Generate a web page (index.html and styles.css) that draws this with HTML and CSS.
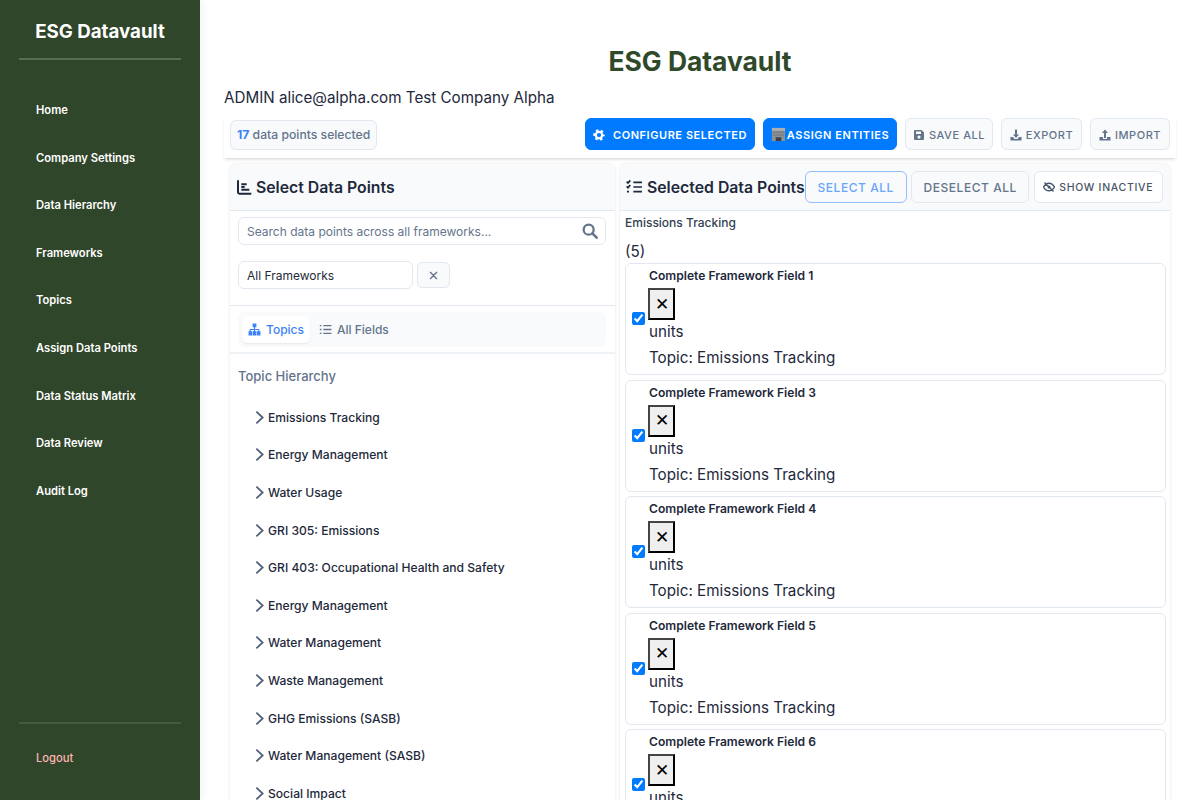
FILE: index.html
```html
<!DOCTYPE html>
<html lang="en">
<head>
  <meta charset="UTF-8">
  <meta name="viewport" content="width=device-width, initial-scale=1.0">
  <title>ESG Datavault</title>
  <link rel="stylesheet" href="styles.css">
</head>
<body>
  <aside class="sidebar">
    <div class="sidebarBrand">ESG Datavault</div>
    <nav class="sidebarNav">
      <a href="#">Home</a>
      <a href="#">Company Settings</a>
      <a href="#">Data Hierarchy</a>
      <a href="#">Frameworks</a>
      <a href="#">Topics</a>
      <a href="#">Assign Data Points</a>
      <a href="#">Data Status Matrix</a>
      <a href="#">Data Review</a>
      <a href="#">Audit Log</a>
    </nav>
    <div class="sidebarFoot"><a href="#">Logout</a></div>
  </aside>

  <main class="main">
    <h1 class="pageTitle">ESG Datavault</h1>
    <p class="userLine">ADMIN alice@alpha.com Test Company Alpha</p>

    <div class="toolbar">
      <div class="selectedCount"><b>17</b> data points selected</div>
      <div class="toolbarActions">
        <button class="btn btnPrimary btnConfigure">
          <svg class="icon" viewBox="0 0 24 24"><circle cx="12" cy="12" r="6.500" fill="none" stroke="currentColor" stroke-width="4.500"/><circle cx="12" cy="12" r="9.500" fill="none" stroke="currentColor" stroke-width="4" stroke-dasharray="5 4.950" stroke-dashoffset="2.500"/></svg>
          CONFIGURE SELECTED
        </button>
        <button class="btn btnPrimary btnAssign">
          <svg class="buildingIcon" viewBox="0 0 16 16"><rect x="1" y="1" width="14" height="14" fill="#8b9196"/><rect x="1" y="1" width="14" height="3" fill="#a9afb3"/><rect x="2" y="5" width="12" height="1" fill="#6f757a"/><rect x="2" y="8" width="12" height="1" fill="#6f757a"/><rect x="5" y="11" width="6" height="4" fill="#3c4145"/></svg>ASSIGN ENTITIES
        </button>
        <button class="btn btnLight btnSave">
          <svg class="icon" viewBox="0 0 24 24"><path fill="currentColor" fill-rule="evenodd" d="M4 2h13l5 5v13a2 2 0 0 1-2 2H4a2 2 0 0 1-2-2V4a2 2 0 0 1 2-2zm2 3v5h10V5zm6 8a3.200 3.200 0 1 0 0 6.400 3.200 3.200 0 0 0 0-6.400z"/></svg>
          SAVE ALL
        </button>
        <button class="btn btnLight btnExport">
          <svg class="icon" viewBox="0 0 24 24"><path fill="currentColor" d="M10 1h4v10h4l-6 7-6-7h4zM1 16h5l3 4h6l3-4h5v7H1z"/></svg>
          EXPORT
        </button>
        <button class="btn btnLight btnImport">
          <svg class="icon" viewBox="0 0 24 24"><path fill="currentColor" d="M12 1l6 7h-4v10h-4V8H6zM1 16h7v4h8v-4h7v7H1z"/></svg>
          IMPORT
        </button>
      </div>
    </div>

    <div class="panels">
      <section class="panel panelLeft">
        <header class="panelHead">
          <svg class="headIcon" viewBox="0 0 24 24"><path fill="none" stroke="currentColor" stroke-width="3" d="M3 2v18a2 2 0 0 0 2 2h18M8 8h8M8 12h5M8 16h12"/></svg>
          <h2>Select Data Points</h2>
        </header>
        <div class="filters">
          <div class="searchBox">
            <span>Search data points across all frameworks...</span>
            <svg class="searchIcon" viewBox="0 0 24 24"><circle cx="10" cy="10" r="7.500" fill="none" stroke="currentColor" stroke-width="3.400"/><path d="M15.500 15.500L22 22" stroke="currentColor" stroke-width="3.800" stroke-linecap="round"/></svg>
          </div>
          <div class="frameworkRow">
            <div class="frameworkSelect">All Frameworks</div>
            <button class="clearBtn">
              <svg viewBox="0 0 10 10"><path d="M1.500 1.500l7 7M8.500 1.500l-7 7" stroke="currentColor" stroke-width="1.500" stroke-linecap="round"/></svg>
            </button>
          </div>
        </div>
        <div class="tabsWrap">
          <div class="tabs">
            <div class="tab tabActive">
              <svg class="tabIcon" viewBox="0 0 24 24"><path fill="currentColor" d="M8.500 1h7v7H13v3h7a1 1 0 0 1 1 1v3h2v8h-7v-8h3v-2h-6v2h2v8H9v-8h2v-2H5v2h3v8H1v-8h2v-3a1 1 0 0 1 1-1h7V8H8.500z"/></svg>
              Topics
            </div>
            <div class="tab">
              <svg class="tabIcon" viewBox="0 0 24 24"><path fill="none" stroke="currentColor" stroke-width="2.400" d="M8 5h15M8 12h15M8 19h15M1.500 5h3M1.500 12h3M1.500 19h3"/></svg>
              All Fields
            </div>
          </div>
        </div>
        <div class="treeTitle">Topic Hierarchy</div>
        <ul class="tree">
          <li><svg class="chevron" viewBox="0 0 10 16"><path d="M1.500 1.500L8.500 8l-7 6.500" fill="none" stroke="currentColor" stroke-width="2"/></svg>Emissions Tracking</li>
          <li><svg class="chevron" viewBox="0 0 10 16"><path d="M1.500 1.500L8.500 8l-7 6.500" fill="none" stroke="currentColor" stroke-width="2"/></svg>Energy Management</li>
          <li><svg class="chevron" viewBox="0 0 10 16"><path d="M1.500 1.500L8.500 8l-7 6.500" fill="none" stroke="currentColor" stroke-width="2"/></svg>Water Usage</li>
          <li><svg class="chevron" viewBox="0 0 10 16"><path d="M1.500 1.500L8.500 8l-7 6.500" fill="none" stroke="currentColor" stroke-width="2"/></svg>GRI 305: Emissions</li>
          <li><svg class="chevron" viewBox="0 0 10 16"><path d="M1.500 1.500L8.500 8l-7 6.500" fill="none" stroke="currentColor" stroke-width="2"/></svg>GRI 403: Occupational Health and Safety</li>
          <li><svg class="chevron" viewBox="0 0 10 16"><path d="M1.500 1.500L8.500 8l-7 6.500" fill="none" stroke="currentColor" stroke-width="2"/></svg>Energy Management</li>
          <li><svg class="chevron" viewBox="0 0 10 16"><path d="M1.500 1.500L8.500 8l-7 6.500" fill="none" stroke="currentColor" stroke-width="2"/></svg>Water Management</li>
          <li><svg class="chevron" viewBox="0 0 10 16"><path d="M1.500 1.500L8.500 8l-7 6.500" fill="none" stroke="currentColor" stroke-width="2"/></svg>Waste Management</li>
          <li><svg class="chevron" viewBox="0 0 10 16"><path d="M1.500 1.500L8.500 8l-7 6.500" fill="none" stroke="currentColor" stroke-width="2"/></svg>GHG Emissions (SASB)</li>
          <li><svg class="chevron" viewBox="0 0 10 16"><path d="M1.500 1.500L8.500 8l-7 6.500" fill="none" stroke="currentColor" stroke-width="2"/></svg>Water Management (SASB)</li>
          <li><svg class="chevron" viewBox="0 0 10 16"><path d="M1.500 1.500L8.500 8l-7 6.500" fill="none" stroke="currentColor" stroke-width="2"/></svg>Social Impact</li>
        </ul>
      </section>

      <section class="panel panelRight">
        <header class="panelHead">
          <svg class="headIcon" viewBox="0 0 24 24"><path fill="none" stroke="currentColor" stroke-width="2.600" d="M11 5h13M11 12h13M11 19h13M1 4l2 2 3.500-4M1 11l2 2 3.500-4M1.500 19h3"/></svg>
          <h2>Selected Data Points</h2>
          <div class="headActions">
            <button class="btn btnOutline">SELECT ALL</button>
            <button class="btn btnLight btnDeselect">DESELECT ALL</button>
            <button class="btn btnGhost">
              <svg class="icon" viewBox="0 0 24 24"><path fill="none" stroke="currentColor" stroke-width="2.600" d="M1 12c3-5 7-7.500 11-7.500S20 7 23 12c-3 5-7 7.500-11 7.500S4 17 1 12zM3 3l18 18"/><circle cx="12" cy="12" r="3" fill="currentColor"/></svg>
              SHOW INACTIVE
            </button>
          </div>
        </header>
        <div class="selectedBody">
          <div class="groupName">Emissions Tracking</div>
          <div class="groupCount">(5)</div>

          <div class="fieldCard">
            <input class="fieldCheck" type="checkbox" checked>
            <div class="fieldInfo">
              <div class="fieldName">Complete Framework Field 1</div>
              <button class="brokenBtn">✕</button>
              <div>units</div>
              <div class="fieldTopic">Topic: Emissions Tracking</div>
            </div>
          </div>
          <div class="fieldCard">
            <input class="fieldCheck" type="checkbox" checked>
            <div class="fieldInfo">
              <div class="fieldName">Complete Framework Field 3</div>
              <button class="brokenBtn">✕</button>
              <div>units</div>
              <div class="fieldTopic">Topic: Emissions Tracking</div>
            </div>
          </div>
          <div class="fieldCard">
            <input class="fieldCheck" type="checkbox" checked>
            <div class="fieldInfo">
              <div class="fieldName">Complete Framework Field 4</div>
              <button class="brokenBtn">✕</button>
              <div>units</div>
              <div class="fieldTopic">Topic: Emissions Tracking</div>
            </div>
          </div>
          <div class="fieldCard">
            <input class="fieldCheck" type="checkbox" checked>
            <div class="fieldInfo">
              <div class="fieldName">Complete Framework Field 5</div>
              <button class="brokenBtn">✕</button>
              <div>units</div>
              <div class="fieldTopic">Topic: Emissions Tracking</div>
            </div>
          </div>
          <div class="fieldCard">
            <input class="fieldCheck" type="checkbox" checked>
            <div class="fieldInfo">
              <div class="fieldName">Complete Framework Field 6</div>
              <button class="brokenBtn">✕</button>
              <div>units</div>
              <div class="fieldTopic">Topic: Emissions Tracking</div>
            </div>
          </div>
        </div>
      </section>
    </div>
  </main>
</body>
</html>
```

FILE: styles.css
```css
* {
  box-sizing: border-box;
  margin: 0;
  padding: 0;
}
html, body {
  height: 100%;
  overflow: hidden;
}
body {
  display: flex;
  background-color: #fff;
  color: #1e293b;
  font-family: Inter, "Liberation Sans", sans-serif;
  font-size: 15.200px;
}
button {
  font-family: inherit;
}
a {
  text-decoration: none;
}

/* sidebar */
.sidebar {
  flex: none;
  width: 200px;
  height: 800px;
  display: flex;
  flex-direction: column;
  padding: 0 19px;
  background-color: #30462a;
  box-shadow: 2px 0 8px rgba(0, 0, 0, 0.06);
}
.sidebarBrand {
  height: 60px;
  padding-top: 20px;
  border-bottom: 2px solid #5a6b55;
  color: #fff;
  font-size: 18.700px;
  font-weight: 700;
  line-height: 24px;
  text-align: center;
}
.sidebarNav {
  display: flex;
  flex-direction: column;
  flex: 1;
  padding-top: 27px;
}
.sidebarNav a {
  height: 47.600px;
  padding: 0 17px;
  color: #fff;
  font-size: 11.200px;
  font-weight: 600;
  line-height: 47.600px;
}
.sidebarFoot {
  height: 78px;
  padding: 23px 17px 0;
  border-top: 2px solid #455a40;
}
.sidebarFoot a {
  color: #ffb3b3;
  font-size: 11.200px;
  font-weight: 500;
  line-height: 20px;
}

/* main area */
.main {
  flex: 1;
  min-width: 0;
  height: 800px;
  padding: 0 24px;
  overflow: hidden;
}
.pageTitle {
  padding-top: 44px;
  color: #2f4a2a;
  font-size: 26.400px;
  font-weight: 700;
  line-height: 34px;
  text-align: center;
}
.userLine {
  margin-top: 10px;
  font-size: 15.200px;
  line-height: 20px;
}

.toolbar {
  display: flex;
  align-items: flex-end;
  justify-content: space-between;
  height: 40px;
  padding: 0 6px 8px;
  margin-top: 10px;
  box-shadow: 0 2px 3px -1px rgba(30, 41, 59, 0.22);
}
.selectedCount {
  padding: 0 6px;
  height: 30px;
  border: 1px solid #e2e8f0;
  border-radius: 6px;
  background-color: #f8fafc;
  color: #64748b;
  font-size: 12.200px;
  font-weight: 500;
  line-height: 28px;
}
.selectedCount b {
  color: #3b82f6;
  font-weight: 700;
}
.toolbarActions {
  display: flex;
  gap: 8px;
}
.toolbarActions .btn {
  padding-top: 1px;
}
.btn {
  display: inline-flex;
  align-items: center;
  justify-content: center;
  gap: 4px;
  height: 32px;
  padding: 0;
  border: 1px solid #e2e8f0;
  border-radius: 6px;
  font-size: 11px;
  font-weight: 600;
  letter-spacing: 0.55px;
  white-space: nowrap;
}
.icon {
  flex: none;
  width: 12px;
  height: 12px;
}
.btnPrimary {
  border-color: #007bff;
  background-color: #007bff;
  color: #fff;
}
.btnConfigure {
  gap: 8px;
  width: 170px;
}
.btnAssign {
  gap: 1px;
  width: 134px;
}
.buildingIcon {
  flex: none;
  width: 15px;
  height: 15px;
}
.btnLight {
  background-color: #f8fafc;
  color: #64748b;
  font-weight: 500;
}
.btnSave {
  width: 88px;
}
.btnExport {
  width: 81px;
}
.btnImport {
  width: 80px;
}
.btnOutline {
  width: 102px;
  border: 1.500px solid #93c0fb;
  background-color: #f8fafc;
  color: #6aa5f8;
  font-size: 12px;
  font-weight: 500;
}
.btnDeselect {
  width: 118px;
  font-size: 12px;
}
.btnGhost {
  width: 129px;
  background-color: #fff;
  color: #475569;
  font-size: 10.500px;
  font-weight: 500;
  letter-spacing: 0.7px;
}

/* panels */
.panels {
  display: flex;
  gap: 5px;
  padding: 6px 6px 0;
}
.panel {
  flex: none;
  height: 660px;
  border-radius: 6px;
  background-color: #fff;
  box-shadow: 0 0 3px rgba(30, 41, 59, 0.12);
  overflow: hidden;
}
.panelLeft {
  width: 385px;
}
.panelRight {
  width: 550px;
}
.panelHead {
  display: flex;
  align-items: center;
  gap: 5px;
  height: 47px;
  padding: 0 7px 0 6px;
  border-bottom: 1px solid #e2e8f0;
  background-color: #f8fafc;
}
.panelLeft .panelHead {
  gap: 4px;
}
.panelHead h2 {
  margin-top: 2px;
  font-size: 15.800px;
  font-weight: 600;
  line-height: 20px;
  white-space: nowrap;
}
.headIcon {
  flex: none;
  width: 16px;
  height: 16px;
}
.headActions {
  display: flex;
  flex: none;
  gap: 4.500px;
  margin-left: -5px;
}

.filters {
  height: 95px;
  padding: 6px 9px 0 8px;
  border-bottom: 1px solid #e2e8f0;
}
.searchBox {
  display: flex;
  align-items: center;
  justify-content: space-between;
  height: 28px;
  padding: 0 7px 0 8px;
  border: 1px solid #e2e8f0;
  border-radius: 6px;
  color: #64748b;
  font-size: 12px;
}
.searchIcon {
  width: 16px;
  height: 16px;
  color: #64748b;
}
.frameworkRow {
  display: flex;
  align-items: center;
  gap: 4px;
  margin-top: 16px;
}
.frameworkSelect {
  width: 175px;
  height: 28px;
  padding: 0 8px;
  border: 1px solid #e2e8f0;
  border-radius: 6px;
  font-size: 12px;
  line-height: 27px;
}
.clearBtn {
  display: flex;
  align-items: center;
  justify-content: center;
  width: 33px;
  height: 26px;
  border: 1px solid #e2e8f0;
  border-radius: 5px;
  background-color: #f8fafc;
  color: #64748b;
}
.clearBtn svg {
  width: 9px;
  height: 9px;
}
.tabsWrap {
  height: 48px;
  padding: 6px 9px 0 8px;
  border-bottom: 2px solid #eef1f6;
}
.tabs {
  display: flex;
  align-items: center;
  gap: 3px;
  height: 35px;
  padding: 0 4px;
  border-radius: 6px;
  background-color: #f8fafc;
}
.tab {
  display: flex;
  align-items: center;
  gap: 5px;
  height: 27px;
  padding: 0 6px;
  border-radius: 5px;
  color: #64748b;
  font-size: 12px;
  font-weight: 500;
}
.tabActive {
  background-color: #fff;
  color: #3b82f6;
  box-shadow: 0 1px 2px rgba(0, 0, 0, 0.08);
}
.tabIcon {
  width: 13px;
  height: 13px;
}
.treeTitle {
  padding: 13px 8px 0;
  color: #64748b;
  font-size: 13px;
  font-weight: 500;
  line-height: 18px;
}
.tree {
  list-style: none;
  padding: 13.500px 0 0 25px;
}
.tree li {
  display: flex;
  align-items: center;
  gap: 4px;
  height: 37.600px;
  font-size: 12.100px;
  font-weight: 500;
}
.chevron {
  width: 9px;
  height: 15px;
  color: #52617a;
}

/* selected list */
.selectedBody {
  padding: 3px 4px 0 5px;
}
.groupName {
  color: #334155;
  font-size: 12px;
  font-weight: 500;
  line-height: 18px;
}
.groupCount {
  margin-top: 9px;
  line-height: 21px;
}
.fieldCard {
  display: flex;
  align-items: center;
  gap: 4px;
  height: 112px;
  margin-top: 4.500px;
  padding: 0 6px;
  border: 1px solid #e2e8f0;
  border-radius: 6px;
}
.groupCount + .fieldCard {
  margin-top: 1px;
}
.fieldCheck {
  flex: none;
  width: 13px;
  height: 13px;
  margin-top: -1px;
  accent-color: #007bff;
}
.fieldInfo {
  align-self: flex-start;
  line-height: 23px;
}
.fieldName {
  font-size: 12.100px;
  font-weight: 600;
  line-height: 24px;
}
.brokenBtn {
  display: block;
  width: 27px;
  height: 32px;
  margin-left: -1px;
  margin-bottom: 0.250px;
  border: 2px outset #444;
  background-color: #efefef;
  color: #000;
  font-size: 17px;
  line-height: 1;
}
.fieldTopic {
  margin-top: 3px;
}
```
